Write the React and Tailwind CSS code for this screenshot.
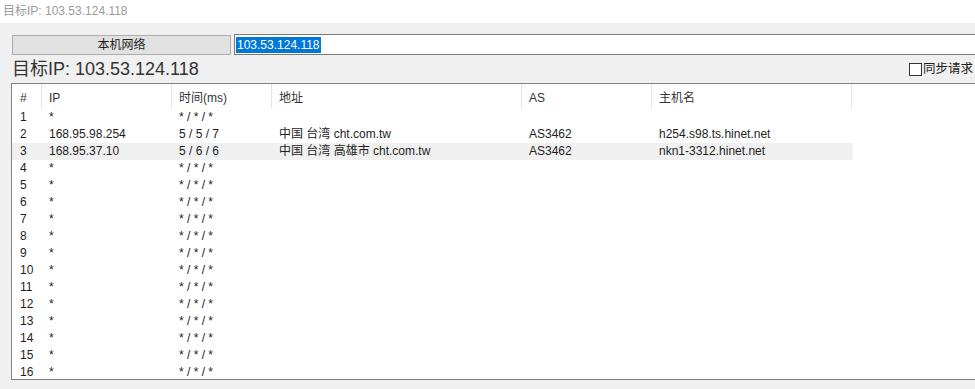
import React from "react";

const cols = [
  { w: "w-[30px]", pl: "pl-[8px]" },
  { w: "w-[130px]", pl: "pl-[7px]" },
  { w: "w-[100px]", pl: "pl-[7px]" },
  { w: "w-[250px]", pl: "pl-[7px]" },
  { w: "w-[130px]", pl: "pl-[7px]" },
  { w: "w-[200px]", pl: "pl-[7px]" },
];

const headers = ["#", "IP", "时间(ms)", "地址", "AS", "主机名"];

const rows = [
  ["1", "*", "* / * / *", "", "", ""],
  ["2", "168.95.98.254", "5 / 5 / 7", "中国 台湾 cht.com.tw", "AS3462", "h254.s98.ts.hinet.net"],
  ["3", "168.95.37.10", "5 / 6 / 6", "中国 台湾 高雄市 cht.com.tw", "AS3462", "nkn1-3312.hinet.net"],
];
for (let i = 4; i <= 16; i++) rows.push([String(i), "*", "* / * / *", "", "", ""]);

export default function App() {
  return (
    <div
      className="w-[975px] h-[389px] overflow-hidden bg-[#f0f0f0] text-[#1e1e1e]"
      style={{ fontFamily: '"Liberation Sans", "Noto Sans CJK SC", sans-serif' }}
    >
      <div className="h-[23px] bg-white pl-[3px] text-[12px] leading-[23px] text-[#9b9b9b]">
        目标IP: 103.53.124.118
      </div>
      <div className="flex mt-[11px] h-[21px]">
        <div className="shrink-0 ml-[12px] mt-[1px] w-[219px] h-[20px] bg-[#e1e1e1] border border-[#adadad] flex items-center justify-center text-[12px] leading-none">
          本机网络
        </div>
        <div className="shrink-0 ml-[3px] w-[760px] h-[21px] bg-white border border-[#7a7a7a] flex items-center pl-[1px]">
          <span className="bg-[#0078d7] text-white text-[12px] leading-[16px] px-[1px]">103.53.124.118</span>
        </div>
      </div>
      <div className="flex items-center justify-between h-[28px] pl-[12px]">
        <span className="text-[18px] leading-none text-[#333]">目标IP: 103.53.124.118</span>
        <div className="flex items-center mr-[2px]">
          <span className="w-[13px] h-[13px] border border-[#333] bg-white mr-[1px]"></span>
          <span className="text-[12.5px] leading-none">同步请求</span>
        </div>
      </div>
      <div className="ml-[11px] w-[970px] h-[297px] bg-white border border-[#828282] overflow-hidden">
        <div className="flex h-[25px]">
          {headers.map((h, i) => (
            <div
              key={i}
              className={`${cols[i].w} ${cols[i].pl} h-[25px] border-r border-[#e5e5e5] flex items-center pt-[3px] text-[12px] text-[#333] shrink-0`}
            >
              {h}
            </div>
          ))}
        </div>
        {rows.map((r, ri) => (
          <div key={ri} className={`flex h-[17px] w-[841px] ${ri === 2 ? "bg-[#f0f0f0]" : ""}`}>
            {r.map((c, ci) => (
              <div
                key={ci}
                className={`${cols[ci].w} ${cols[ci].pl} shrink-0 text-[12px] leading-[17px] whitespace-nowrap overflow-hidden`}
              >
                {c}
              </div>
            ))}
          </div>
        ))}
      </div>
    </div>
  );
}
